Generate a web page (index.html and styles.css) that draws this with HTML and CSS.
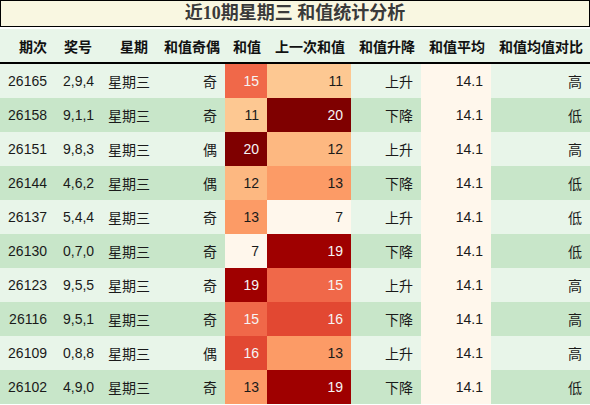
FILE: index.html
```html
<!DOCTYPE html>
<html lang="zh">
  <head>
    <meta charset="UTF-8" />
    <meta name="viewport" content="width=device-width, initial-scale=1.0" />
    <title>近10期星期三 和值统计分析</title>
    <link rel="stylesheet" href="styles.css">
  </head>
  <body>
    <div class="title-box">近10期星期三 和值统计分析</div>
    <table class="stats">
      <colgroup>
        <col class="c-issue" />
        <col class="c-nums" />
        <col class="c-week" />
        <col class="c-parity" />
        <col class="c-sum" />
        <col class="c-prev" />
        <col class="c-trend" />
        <col class="c-avg" />
        <col class="c-cmp" />
      </colgroup>
      <thead>
        <tr>
          <th>期次</th>
          <th>奖号</th>
          <th>星期</th>
          <th>和值奇偶</th>
          <th>和值</th>
          <th>上一次和值</th>
          <th>和值升降</th>
          <th>和值平均</th>
          <th>和值均值对比</th>
        </tr>
      </thead>
      <tbody>
        <tr>
          <td>26165</td><td>2,9,4</td><td>星期三</td><td>奇</td>
          <td class="v15">15</td><td class="v11">11</td>
          <td>上升</td><td class="avg">14.1</td><td>高</td>
        </tr>
        <tr>
          <td>26158</td><td>9,1,1</td><td>星期三</td><td>奇</td>
          <td class="v11">11</td><td class="v20">20</td>
          <td>下降</td><td class="avg">14.1</td><td>低</td>
        </tr>
        <tr>
          <td>26151</td><td>9,8,3</td><td>星期三</td><td>偶</td>
          <td class="v20">20</td><td class="v12">12</td>
          <td>上升</td><td class="avg">14.1</td><td>高</td>
        </tr>
        <tr>
          <td>26144</td><td>4,6,2</td><td>星期三</td><td>偶</td>
          <td class="v12">12</td><td class="v13">13</td>
          <td>下降</td><td class="avg">14.1</td><td>低</td>
        </tr>
        <tr>
          <td>26137</td><td>5,4,4</td><td>星期三</td><td>奇</td>
          <td class="v13">13</td><td class="v7">7</td>
          <td>上升</td><td class="avg">14.1</td><td>低</td>
        </tr>
        <tr>
          <td>26130</td><td>0,7,0</td><td>星期三</td><td>奇</td>
          <td class="v7">7</td><td class="v19">19</td>
          <td>下降</td><td class="avg">14.1</td><td>低</td>
        </tr>
        <tr>
          <td>26123</td><td>9,5,5</td><td>星期三</td><td>奇</td>
          <td class="v19">19</td><td class="v15">15</td>
          <td>上升</td><td class="avg">14.1</td><td>高</td>
        </tr>
        <tr>
          <td>26116</td><td>9,5,1</td><td>星期三</td><td>奇</td>
          <td class="v15">15</td><td class="v16">16</td>
          <td>下降</td><td class="avg">14.1</td><td>高</td>
        </tr>
        <tr>
          <td>26109</td><td>0,8,8</td><td>星期三</td><td>偶</td>
          <td class="v16">16</td><td class="v13">13</td>
          <td>上升</td><td class="avg">14.1</td><td>高</td>
        </tr>
        <tr>
          <td>26102</td><td>4,9,0</td><td>星期三</td><td>奇</td>
          <td class="v13">13</td><td class="v19">19</td>
          <td>下降</td><td class="avg">14.1</td><td>低</td>
        </tr>
      </tbody>
    </table>
  </body>
</html>
```

FILE: styles.css
```css
body {
  margin: 0;
  background-color: #ffffff;
  font-family: "Liberation Sans", "Noto Sans CJK SC", sans-serif;
  font-size: 14px;
  color: #1a1a1a;
}
.title-box {
  width: 588px;
  height: 25px;
  line-height: 25px;
  border: 1px solid #000000;
  background-color: #f9f7e1;
  text-align: center;
  font-family: "Liberation Serif", "Noto Sans CJK SC", serif;
  font-size: 18px;
  font-weight: bold;
  color: #3a3a3a;
  margin-bottom: 2px;
}
.stats {
  width: 590px;
  table-layout: fixed;
  border-collapse: collapse;
  border-spacing: 0;
}
.c-issue { width: 55px; }
.c-nums { width: 45px; }
.c-week { width: 56px; }
.c-parity { width: 69px; }
.c-sum { width: 42px; }
.c-prev { width: 84px; }
.c-trend { width: 70px; }
.c-avg { width: 70px; }
.c-cmp { width: 99px; }
.stats th,
.stats td {
  padding: 0 8px;
  text-align: right;
  white-space: nowrap;
}
.stats th {
  height: 33px;
  background-color: #e8f5e9;
  font-weight: bold;
  color: #111111;
  border-bottom: 2px solid #000000;
}
.stats td {
  height: 34px;
}
.stats tbody tr:nth-child(odd) td {
  background-color: #e8f5e9;
}
.stats tbody tr:nth-child(even) td {
  background-color: #c8e6c9;
}
.stats tbody tr td.avg { background-color: #fff7ec; }
.stats tbody tr td.v7 { background-color: #fff7ec; }
.stats tbody tr td.v11 { background-color: #fdc892; }
.stats tbody tr td.v12 { background-color: #fdb881; }
.stats tbody tr td.v13 { background-color: #fc9b66; }
.stats tbody tr td.v15 { background-color: #f06849; color: #f5f5f5; }
.stats tbody tr td.v16 { background-color: #e24832; color: #f5f5f5; }
.stats tbody tr td.v19 { background-color: #9f0000; color: #f5f5f5; }
.stats tbody tr td.v20 { background-color: #7f0000; color: #f5f5f5; }
```
